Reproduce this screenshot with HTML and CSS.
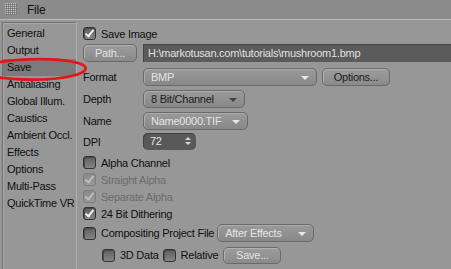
FILE: index.html
```html
<!DOCTYPE html>
<html lang="en">
<head>
    <meta charset="UTF-8">
    <title>Render Settings - Save</title>
    <link rel="stylesheet" href="styles.css">
</head>
<body>
    <div class="titlebar">
        <svg class="grip" width="12" height="12" viewBox="0 0 12 12">
            <defs>
                <pattern id="dots" width="2" height="2" patternUnits="userSpaceOnUse">
                    <rect x="0" y="0" width="1" height="1" fill="#c4c4c4"/>
                    <rect x="1" y="1" width="1" height="1" fill="#6a6a6a"/>
                </pattern>
            </defs>
            <rect width="12" height="12" fill="url(#dots)"/>
        </svg>
        <span class="menu">File</span>
    </div>

    <div class="content">
        <ul class="sidebar">
            <li>General</li>
            <li>Output</li>
            <li class="active">Save</li>
            <li>Antialiasing</li>
            <li>Global Illum.</li>
            <li>Caustics</li>
            <li>Ambient Occl.</li>
            <li>Effects</li>
            <li>Options</li>
            <li>Multi-Pass</li>
            <li>QuickTime VR</li>
        </ul>

        <div class="main">
            <label class="check row-save"><span class="box on"></span>Save Image</label>

            <div class="row row-path">
                <button class="btn btn-path">Path...</button>
                <div class="field">H:\markotusan.com\tutorials\mushroom1.bmp</div>
            </div>

            <div class="row row-format">
                <span class="label">Format</span>
                <div class="select light w-format">BMP<span class="arrow"></span></div>
                <button class="btn dark-text btn-options">Options...</button>
            </div>

            <div class="row row-depth">
                <span class="label">Depth</span>
                <div class="select dark-text w-depth">8 Bit/Channel<span class="arrow"></span></div>
            </div>

            <div class="row row-name">
                <span class="label">Name</span>
                <div class="select light w-name">Name0000.TIF<span class="arrow"></span></div>
            </div>

            <div class="row row-dpi">
                <span class="label">DPI</span>
                <div class="spinner">72<span class="spin"></span></div>
            </div>

            <label class="check row-alpha"><span class="box"></span>Alpha Channel</label>
            <label class="check disabled"><span class="box on"></span>Straight Alpha</label>
            <label class="check disabled"><span class="box on"></span>Separate Alpha</label>
            <label class="check"><span class="box on"></span>24 Bit Dithering</label>

            <div class="row row-comp">
                <label class="check"><span class="box"></span>Compositing Project File</label>
                <div class="select light w-comp">After Effects<span class="arrow"></span></div>
            </div>

            <div class="row row-3d">
                <label class="check"><span class="box"></span>3D Data</label>
                <label class="check"><span class="box"></span>Relative</label>
                <button class="btn btn-save">Save...</button>
            </div>
        </div>
    </div>

    <!-- hand drawn marker round the Save tab -->
    <svg class="circle-mark" width="92" height="30" viewBox="0 0 92 30">
        <path d="M-14 12 C 0 3, 55 2, 78 8 C 89 11, 89 17, 72 21 C 50 26, 15 26, -10 21" fill="none" stroke="#e3161c" stroke-width="2.8" stroke-linecap="round"/>
        <path d="M-6 8 C 10 4, 40 3, 66 5" fill="none" stroke="#e3161c" stroke-width="1.4" stroke-linecap="round"/>
    </svg>
</body>
</html>
```

FILE: styles.css
```css
body {
    margin: 0;
    width: 451px;
    height: 269px;
    overflow: hidden;
    background-color: #979797;
    font-family: "Liberation Sans", Arial, sans-serif;
    font-size: 11px;
    letter-spacing: -0.25px;
    color: #101010;
    position: relative;
}
.titlebar {
    height: 20px;
    background-color: #8b8b8b;
    border-bottom: 1px solid #bcbcbc;
    display: flex;
    align-items: center;
    box-sizing: border-box;
}
.grip {
    margin-left: 5px;
    margin-top: -1px;
}
.menu {
    margin-left: 10px;
    font-size: 12px;
}
.content {
    display: flex;
    padding-top: 2px;
    height: 248px;
}
.sidebar {
    list-style: none;
    margin: 0 0 0 2px;
    padding: 2px 0 0 0;
    width: 73px;
    border-top: 1px solid #727272;
    border-left: 1px solid #727272;
    border-right: 1px solid #b0b0b0;
    box-shadow: inset 1px 1px 0 #a8a8a8;
    white-space: nowrap;
}
.sidebar li {
    height: 17px;
    line-height: 17px;
    padding-left: 4px;
}
.sidebar .active {
    background-color: #7b7b7b;
}
.main {
    flex: 1;
    display: flex;
    flex-direction: column;
    padding-left: 6px;
    padding-top: 3px;
    white-space: nowrap;
}
.row {
    display: flex;
    align-items: center;
}
.label {
    width: 60px;
}
.check {
    display: flex;
    align-items: center;
    height: 17px;
}
.check .box {
    width: 11px;
    height: 11px;
    margin-right: 5px;
    border: 1px solid #333;
    border-radius: 3px;
    background: linear-gradient(#5e5e5e, #858585);
    box-shadow: inset 1px 1px 0 #4a4a4a;
    position: relative;
}
.check .box.on::after {
    content: "";
    position: absolute;
    left: 3px;
    top: 0px;
    width: 3px;
    height: 7px;
    border-right: 2px solid #f4f4f4;
    border-bottom: 2px solid #f4f4f4;
    transform: rotate(38deg);
}
.check.disabled {
    color: #6c6c6c;
}
.check.disabled .box {
    border-color: #7c7c7c;
    background: linear-gradient(#8a8a8a, #999);
    box-shadow: none;
}
.check.disabled .box.on::after {
    border-color: #bdbdbd;
}
.btn {
    font: inherit;
    letter-spacing: inherit;
    height: 18px;
    padding: 0;
    border: 1px solid #6a6a6a;
    border-radius: 5px;
    background: linear-gradient(#9d9d9d, #8a8a8a);
    box-shadow: inset 1px 1px 0 #b0b0b0;
    color: #e2e2e2;
}
.dark-text {
    color: #1c1c1c;
}
.row-save {
    margin-bottom: 2px;
}
.btn-path {
    width: 54px;
    margin-right: 6px;
}
.field {
    flex: 1;
    height: 18px;
    line-height: 18px;
    background-color: #5b5b5b;
    color: #e0e0e0;
    padding-left: 5px;
    box-shadow: inset 1px 1px 0 #454545;
}
.select {
    height: 18px;
    line-height: 17px;
    box-sizing: border-box;
    border: 1px solid #6a6a6a;
    border-radius: 5px;
    background: linear-gradient(#9a9a9a, #888);
    box-shadow: inset 1px 1px 0 #ababab;
    padding-left: 7px;
    position: relative;
}
.select.light {
    color: #e4e4e4;
}
.arrow {
    position: absolute;
    right: 7px;
    top: 7px;
    border-left: 4px solid transparent;
    border-right: 4px solid transparent;
    border-top: 4px solid #e8e8e8;
}
.dark-text .arrow {
    border-top-color: #444;
}
.row-format {
    margin-top: 6px;
    height: 18px;
}
.w-format {
    width: 174px;
}
.btn-options {
    width: 68px;
    margin-left: 5px;
}
.row-depth {
    margin-top: 4px;
    height: 18px;
}
.w-depth {
    width: 102px;
}
.row-name {
    margin-top: 4px;
    height: 18px;
}
.w-name {
    width: 105px;
}
.row-dpi {
    margin-top: 3px;
    height: 17px;
}
.spinner {
    width: 53px;
    height: 17px;
    line-height: 17px;
    box-sizing: border-box;
    border-radius: 5px;
    background-color: #595959;
    box-shadow: inset 1px 1px 0 #404040;
    color: #e6e6e6;
    padding-left: 7px;
    position: relative;
}
.spin::before,
.spin::after {
    content: "";
    position: absolute;
    right: 5px;
    border-left: 3px solid transparent;
    border-right: 3px solid transparent;
}
.spin::before {
    top: 4px;
    border-bottom: 3px solid #d8d8d8;
}
.spin::after {
    top: 9px;
    border-top: 3px solid #d8d8d8;
}
.row-alpha {
    margin-top: 4px;
}
.row-comp {
    margin-top: 2px;
    height: 18px;
}
.w-comp {
    width: 97px;
    margin-left: 3px;
}
.row-3d {
    margin-top: 4px;
    height: 18px;
    padding-left: 19px;
}
.row-3d .check {
    margin-right: 4px;
}
.btn-save {
    width: 58px;
    height: 17px;
    margin-left: 1px;
}
.circle-mark {
    position: absolute;
    left: 0;
    top: 55px;
}
```
